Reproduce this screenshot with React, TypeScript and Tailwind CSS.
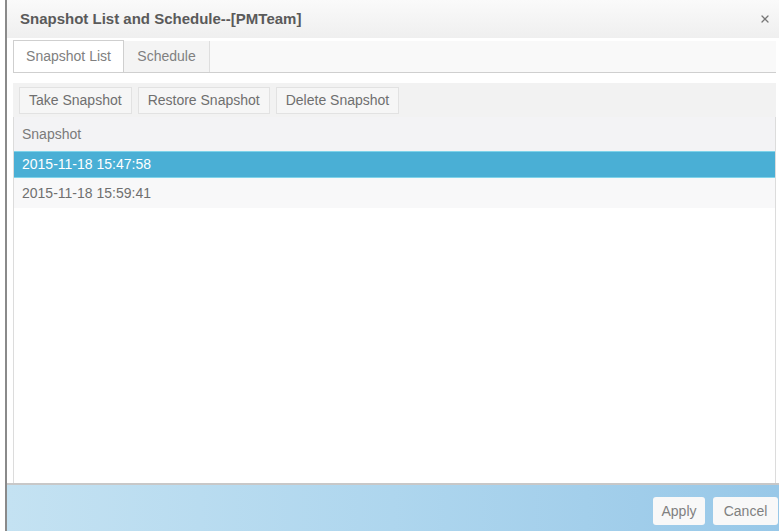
import { X } from 'lucide-react';

const rows = ['2015-11-18 15:47:58', '2015-11-18 15:59:41'];

export default function App() {
  return (
    <div className="flex h-[531px] w-[779px] overflow-hidden bg-white font-['Liberation_Sans',Arial,sans-serif] text-[14px] text-[#6f6f6f]">
      {/* page edge behind the dialog */}
      <div className="w-[5px] bg-white" />
      <div className="w-[2px] bg-[#8a8a8a]" />

      <div className="flex flex-1 flex-col">
        {/* Title bar */}
        <div className="flex h-[38px] items-center justify-between bg-gradient-to-b from-[#fafafa] to-[#efefef] pl-[13px] pr-[8px]">
          <span className="text-[15px] font-bold text-[#5a5a5a]">Snapshot List and Schedule--[PMTeam]</span>
          <X className="h-[12px] w-[12px] text-[#777]" strokeWidth={2.5} />
        </div>

        {/* Tabs */}
        <div className="ml-[6px] mr-[3px] mt-[3px] flex h-[32px] items-end border-b border-[#cfcfcf] bg-[#f9f9f9]">
          <div className="flex h-[32px] w-[111px] items-center justify-center border border-b-0 border-[#cfcfcf] bg-white text-[#808080]">
            Snapshot List
          </div>
          <div className="flex h-[31px] w-[86px] items-center justify-center border-r border-[#dedede] bg-[#f4f4f4] text-[#808080]">
            Schedule
          </div>
        </div>

        {/* Toolbar */}
        <div className="ml-[6px] mr-[3px] mt-[10px] flex h-[34px] items-center gap-[6px] bg-[#f2f2f2] px-[6px]">
          {['Take Snapshot', 'Restore Snapshot', 'Delete Snapshot'].map((b) => (
            <button
              key={b}
              className="flex h-[27px] items-center border border-[#e2e2e2] bg-[#f6f6f6] px-[9px] text-[14px] text-[#6f6f6f]"
            >
              {b}
            </button>
          ))}
        </div>

        {/* Grid */}
        <div className="ml-[6px] mr-[3px] flex flex-1 flex-col border-x border-[#dcdcdc] bg-white">
          <div className="flex h-[34px] items-center bg-[#f3f3f5] px-[8px] text-[#7a7a7a]">Snapshot</div>
          {rows.map((r, i) => (
            <div
              key={r}
              className={
                i === 0
                  ? 'flex h-[27px] items-center border-y border-[#7fd3ea] bg-[#4aafd5] px-[8px] text-white'
                  : 'flex h-[30px] items-center bg-[#f8f8f9] px-[8px] text-[#6f6f6f]'
              }
            >
              {r}
            </div>
          ))}
        </div>

        {/* Footer */}
        <div className="flex h-[48px] items-center justify-end gap-[8px] border-t-2 border-[#c8c8c8] bg-gradient-to-r from-[#c4e2f2] via-[#aed6ee] to-[#98c8e8] pt-[6px] pr-[1px]">
          <button className="flex h-[28px] w-[52px] items-center justify-center rounded-[3px] bg-[#f8f8f8] text-[14px] text-[#808080]">
            Apply
          </button>
          <button className="flex h-[28px] w-[65px] items-center justify-center rounded-[3px] bg-[#f8f8f8] text-[14px] text-[#808080]">
            Cancel
          </button>
        </div>
      </div>
    </div>
  );
}
